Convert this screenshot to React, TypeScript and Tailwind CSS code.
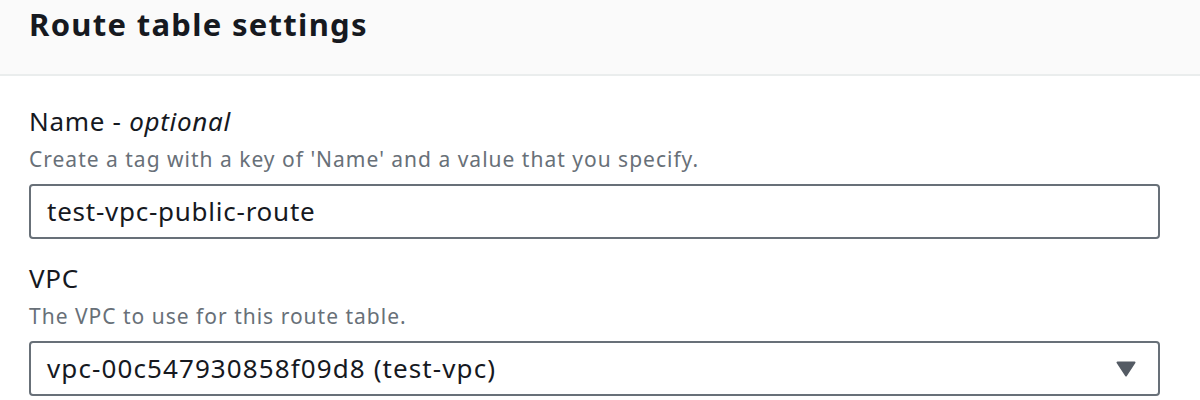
import React from 'react';

const font = { fontFamily: '"Noto Sans", "Open Sans", sans-serif' };

function Field({ label, optional, help, children }: { label: string; optional?: boolean; help: string; children: React.ReactNode }) {
  return (
    <div className="flex flex-col">
      <label className="text-[26px] leading-[30px] tracking-[0.7px] text-[#16191f]">
        {label}
        {optional && (
          <>
            {' - '}
            <i>optional</i>
          </>
        )}
      </label>
      <p className="mt-[10px] text-[21px] leading-[26px] tracking-[1px] text-[#687078]">{help}</p>
      <div className="mt-[12px]">{children}</div>
    </div>
  );
}

export default function App() {
  return (
    <div className="w-[1200px] h-[400px] bg-white overflow-hidden" style={font}>
      {/* header */}
      <div className="h-[76px] bg-[#fafafa] border-b-2 border-[#eaeded] px-[29px] pt-[4px]">
        <h2 className="text-[31px] leading-[40px] font-bold tracking-[1.3px] text-[#16191f]">Route table settings</h2>
      </div>

      <div className="px-[29px] pt-[30px] flex flex-col gap-[24px]">
        <Field label="Name" optional help="Create a tag with a key of 'Name' and a value that you specify.">
          <div className="h-[55px] w-[1131px] border-2 border-[#687078] rounded-[4px] flex items-center px-[16px] text-[26px] tracking-[0.75px] text-[#16191f]">
            test-vpc-public-route
          </div>
        </Field>
        <Field label="VPC" help="The VPC to use for this route table.">
          <div className="h-[55px] w-[1131px] border-2 border-[#687078] rounded-[4px] flex items-center justify-between pl-[16px] pr-[22px] text-[26px] tracking-[1.1px] text-[#16191f]">
            <span>vpc-00c547930858f09d8 (test-vpc)</span>
            <svg width="20" height="16" viewBox="0 0 20 16">
              <path d="M1.5 1.5 H18.5 L10 14.5 Z" fill="#545b64" stroke="#545b64" strokeWidth="2" strokeLinejoin="round" />
            </svg>
          </div>
        </Field>
      </div>
    </div>
  );
}
